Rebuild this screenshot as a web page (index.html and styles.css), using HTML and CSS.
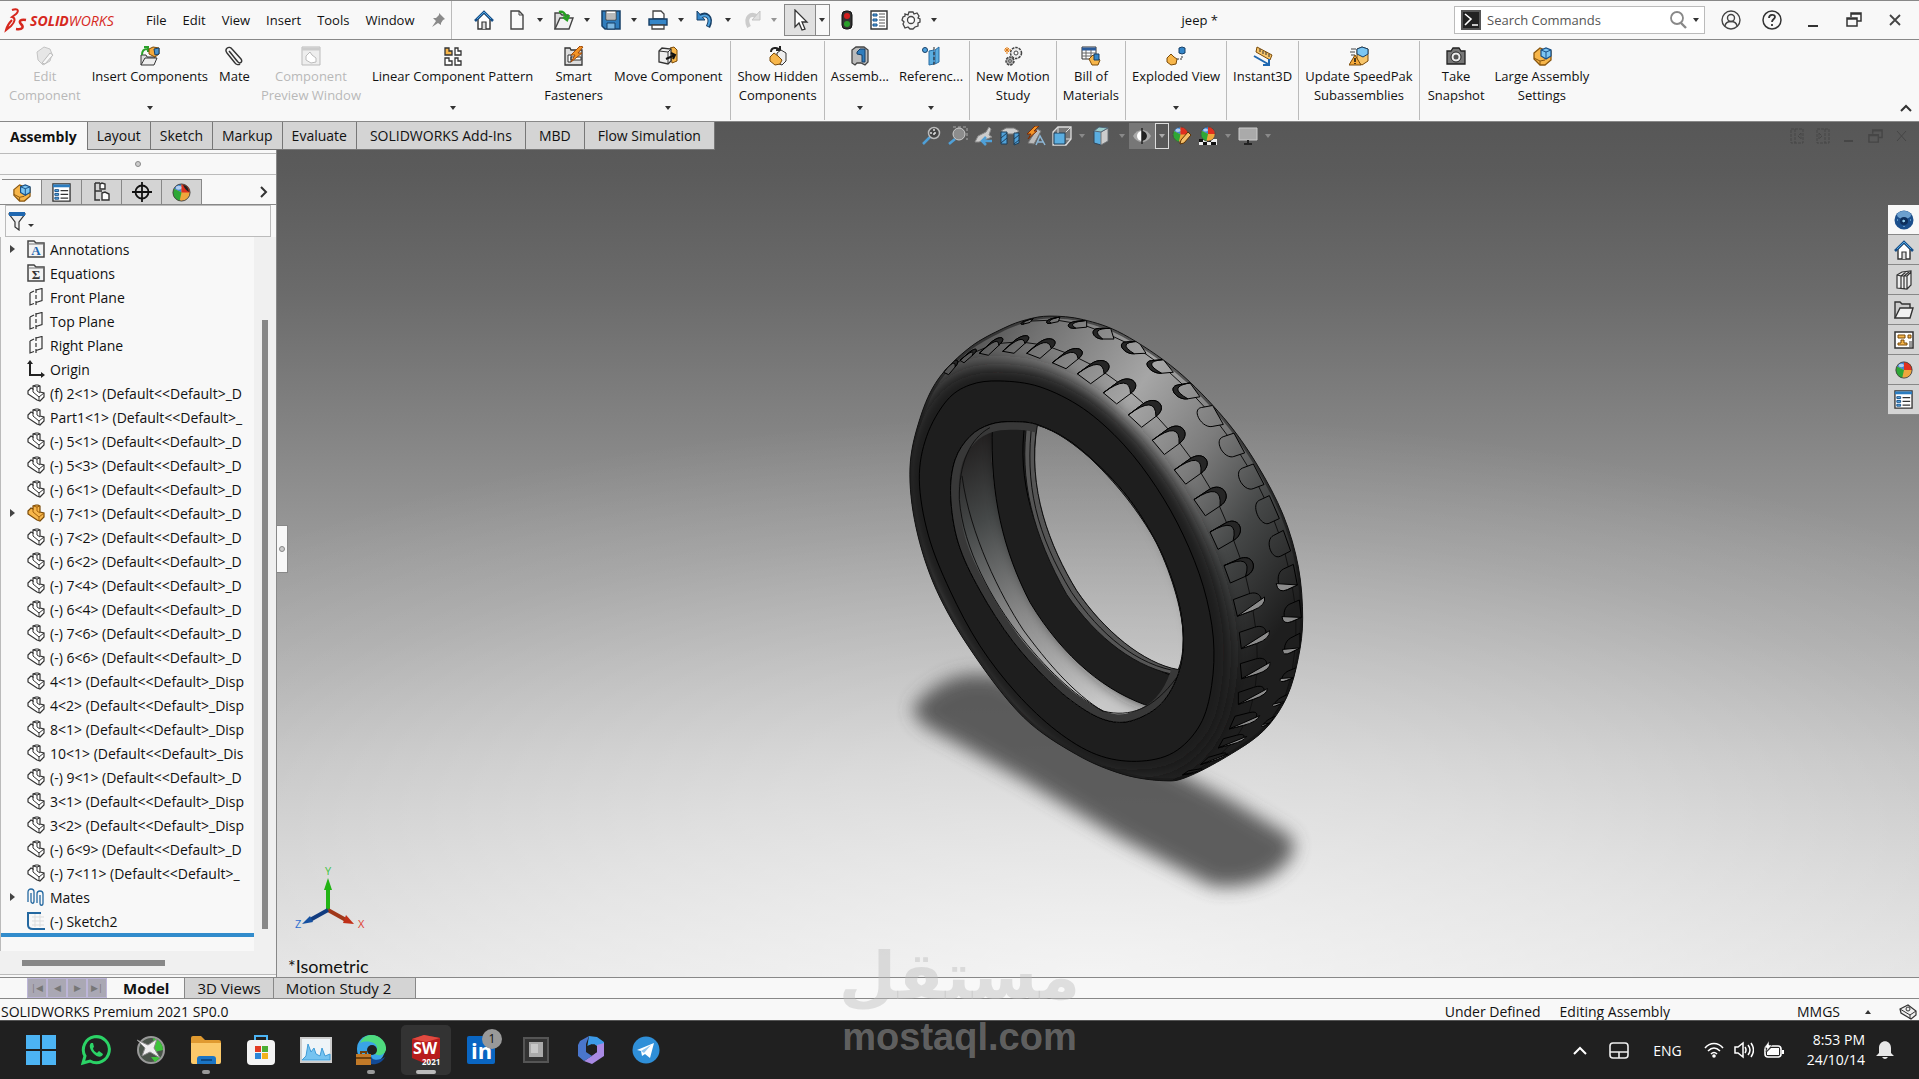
FILE: index.html
```html
<!DOCTYPE html>
<html lang="en">
<head>
    <meta charset="UTF-8">
    <title>jeep * - SOLIDWORKS Premium 2021</title>
    <link rel="stylesheet" href="styles.css">
</head>

<body>
<!-- shared icons -->
<svg class="defs" width="0" height="0" aria-hidden="true">
    <symbol id="i-part" viewBox="0 0 18 18">
        <path d="M1 7l3-3 2 1V2l3-1h2l2 1v6l4 1v4l-4 4-3-1-9-6z" fill="#fff" stroke="#333" stroke-width="1.200"/>
        <path d="M6 5v3l6 5v4M6 2l4 1 3-1M10 3v4l3 2M12 13l5-4" fill="none" stroke="#333"/>
    </symbol>
    <symbol id="i-asm" viewBox="0 0 18 18">
        <path d="M1 7l3-3 2 1V2l3-1h2l2 1v6l4 1v4l-4 4-3-1-9-6z" fill="#f7b64a" stroke="#7a4a08" stroke-width="1.200"/>
        <path d="M6 5v3l6 5v4M6 2l4 1 3-1M10 3v4l3 2M12 13l5-4" fill="none" stroke="#a4630c"/>
    </symbol>
    <symbol id="i-plane" viewBox="0 0 18 18">
        <path d="M3 5l4-2M9 2l6-1.500v12l-6 2M3 5v12l4-1.500" fill="none" stroke="#333" stroke-width="1.200"/>
        <path d="M9 1v17" stroke="#333" stroke-width="1.200" stroke-dasharray="4 2"/>
    </symbol>
    <symbol id="i-dir" viewBox="0 0 18 18">
        <path d="M1 1h6l2 2h8v14H1z" fill="#f3f3f3" stroke="#444" stroke-width="1.500"/>
        <path d="M1 4h16" stroke="#777"/>
    </symbol>
    <symbol id="i-home" viewBox="0 0 20 20">
        <path d="M4 9v10h12V9l-6-6z" fill="#fff" stroke="#333" stroke-width="1.400"/>
        <path d="M8 19v-7h4v7" fill="#ddd" stroke="#333" stroke-width="1.200"/>
        <path d="M1 11l9-9 9 9" fill="none" stroke="#174f87" stroke-width="2.600"/>
        <path d="M3 9l7-7 7 7" fill="none" stroke="#4fa3e0" stroke-width="1"/>
    </symbol>
    <symbol id="i-list" viewBox="0 0 20 20">
        <path d="M1 1h18v18H1z" fill="#fff" stroke="#333" stroke-width="1.400"/>
        <path d="M1 3h18" stroke="#2a7cc0" stroke-width="3"/>
        <path d="M9 8h8M9 12h8M9 16h8" stroke="#333" stroke-width="1.300"/>
        <path d="M3 7h4v2H3zM3 11h4v2H3zM3 15h4v2H3z" fill="#5db1ea" stroke="#174f87"/>
    </symbol>
    <symbol id="i-ball" viewBox="0 0 20 20">
        <circle cx="10" cy="10" r="9" fill="#f0a63c"/>
        <path d="M10 10L2 6a9 9 0 0 1 8-5z" fill="#3d86d6"/>
        <path d="M10 10V1a9 9 0 0 1 9 9z" fill="#e0301e"/>
        <path d="M10 10l-8-4a9 9 0 0 0 6 13z" fill="#2ea836"/>
        <circle cx="10" cy="10" r="9" fill="none" stroke="#444"/>
        <ellipse cx="7" cy="5" rx="3" ry="2" fill="#fff" opacity=".6"/>
    </symbol>
    <symbol id="i-cubes" viewBox="0 0 20 20">
        <path d="M2 7l6-5 5 2 6 1v9l-6 5H8l-6-6z" fill="#f7b64a" stroke="#8a560d" stroke-width="1.300"/>
        <path d="M2 12l6 3 5-1M8 15v4" fill="none" stroke="#8a560d"/>
        <path d="M9 4l5-2 5 2v6l-5 3-5-3z" fill="#7cc6f2" stroke="#174f87" stroke-width="1.200"/>
        <path d="M9 4l5 2 5-2M14 6v7" fill="none" stroke="#174f87"/>
    </symbol>
    <symbol id="i-restore" viewBox="0 0 16 16">
        <path d="M5 5V1h10v8h-4M1 6h10v8H1zM5 2h10M1 7h10" fill="none" stroke="currentColor" stroke-width="1.500"/>
    </symbol>
    <symbol id="i-gears" viewBox="0 0 20 20">
        <circle cx="13" cy="7" r="5.500" fill="#eee" stroke="#444" stroke-width="1.500" stroke-dasharray="2.500 1"/>
        <circle cx="13" cy="7" r="2" fill="#fff" stroke="#444"/>
        <circle cx="7" cy="15" r="4" fill="#aaa" stroke="#444" stroke-width="1.500" stroke-dasharray="2.500 1"/>
        <circle cx="7" cy="15" r="1.300" fill="#fff" stroke="#444"/>
        <path d="M4 1v7M1 4h7M2 2l4 4M6 2L2 6" stroke="#e07b12"/>
    </symbol>
</svg>

<header class="titlebar">
    <div class="logo">
        <svg width="24" height="26" viewBox="0 0 24 26">
            <path d="M8 3c5-2 8 0 4 4l-4 3c4 1 3 5-1 9l-5 4c1-4 3-7 6-10" fill="none" stroke="#d6281e" stroke-width="2"/>
            <path d="M22 13c-5-1-8 1-5 4s2 6-5 5" fill="none" stroke="#d6281e" stroke-width="2.500"/>
        </svg>
        <span class="logo-text"><b>SOLID</b>WORKS</span>
    </div>
    <nav class="menu">
        <button>File</button>
        <button>Edit</button>
        <button>View</button>
        <button>Insert</button>
        <button>Tools</button>
        <button>Window</button>
        <button aria-label="Pin menu"><svg width="14" height="14" viewBox="0 0 14 14"><path d="M8 0l6 6-2 1-2 3 0 2-3-2-6 4 4-6-3-3h3l3-3z" fill="#8a8a8a"/></svg></button>
    </nav>
    <div class="quick">
        <button class="q home" aria-label="Home"><svg width="20" height="20"><use href="#i-home"/></svg></button>
        <button class="q" aria-label="New"><svg width="20" height="20" viewBox="0 0 20 20"><path d="M4 1h8l4 4v14H4z" fill="#fafafa" stroke="#444" stroke-width="1.400"/><path d="M12 1v4h4" fill="none" stroke="#444"/></svg></button>
        <button class="drop" aria-label="New options"></button>
        <button class="q" aria-label="Open"><svg width="20" height="20" viewBox="0 0 20 20"><path d="M1 19V3h5l2 2h6v5" fill="#ddd" stroke="#444" stroke-width="1.400"/><path d="M1 19L6 8h13l-4 11z" fill="#f2f2f2" stroke="#444" stroke-width="1.400"/><path d="M5 2c4-1 6 1 7 5M9 7l4 3 2-5" fill="none" stroke="#25a021" stroke-width="2.500"/></svg></button>
        <button class="drop" aria-label="Open options"></button>
        <button class="q" aria-label="Save"><svg width="20" height="20" viewBox="0 0 20 20"><path d="M1 1h18v18H4l-3-3z" fill="#2f7dbd" stroke="#173f66" stroke-width="1.500"/><path d="M5 1h10v9H5z" fill="#fff" stroke="#444"/><path d="M6 4h8M6 6h8M6 8h8" stroke="#777"/><path d="M6 13h8v6H6z" fill="#7bb6e0" stroke="#173f66"/></svg></button>
        <button class="drop" aria-label="Save options"></button>
        <button class="q" aria-label="Print"><svg width="20" height="20" viewBox="0 0 20 20"><path d="M5 9V1h8l3 3v5z" fill="#fff" stroke="#444" stroke-width="1.300"/><path d="M1 9h18v6H1z" fill="#3586c8" stroke="#173f66" stroke-width="1.400"/><path d="M4 15h12v4H4z" fill="#fff" stroke="#444" stroke-width="1.300"/></svg></button>
        <button class="drop" aria-label="Print options"></button>
        <button class="q" aria-label="Undo"><svg width="20" height="20" viewBox="0 0 20 20"><path d="M4 7c7-5 14 0 9 10" fill="none" stroke="#173f66" stroke-width="4.500"/><path d="M2 1v9h8z" fill="#3586c8" stroke="#173f66"/><path d="M5 7c7-4 12 1 8 9" fill="none" stroke="#4fa3e0" stroke-width="2"/></svg></button>
        <button class="drop" aria-label="Undo options"></button>
        <button class="q" aria-label="Redo" disabled><svg width="20" height="20" viewBox="0 0 20 20"><path d="M16 7C9 2 2 7 7 17" fill="none" stroke="#ccc" stroke-width="4"/><path d="M18 1v9h-8z" fill="#e0e0e0" stroke="#c4c4c4"/></svg></button>
        <button class="drop faded" aria-label="Redo options"></button>
        <button class="q select" aria-label="Select"><svg width="20" height="22" viewBox="0 0 20 22"><path d="M5 1v17l4-4 3 7 3-1-3-7h5z" fill="#fff" stroke="#333" stroke-width="1.300"/></svg></button>
        <button class="drop select-drop" aria-label="Select options"></button>
        <button class="q light" aria-label="Rebuild"><svg width="12" height="20" viewBox="0 0 12 20"><rect x="1" y="1" width="10" height="18" rx="4" fill="#333" stroke="#111"/><circle cx="6" cy="6" r="3" fill="#d42020"/><circle cx="6" cy="14" r="3" fill="#2aa02a"/></svg></button>
        <button class="q light" aria-label="File properties"><svg width="18" height="20" viewBox="0 0 18 20"><path d="M1 1h16v18H1z" fill="#fff" stroke="#333" stroke-width="1.400"/><path d="M3 4h4v2H3zM3 9h4v2H3zM3 14h4v2H3z" fill="#5db1ea" stroke="#174f87"/><path d="M9 4h6M9 7h6M9 10h6M9 13h6M9 16h6" stroke="#555"/></svg></button>
        <button class="q" aria-label="Options"><svg width="20" height="20" viewBox="0 0 20 20"><path d="M8 2h4l1 2 3-1 2 3-1 2 2 1v3l-2 1v3l-3 1-2 2H9l-2-2-3 1-2-4 1-2-2-2 1-3 2-1V4l3 1z" fill="#f4f4f4" stroke="#444" stroke-width="1.300"/><circle cx="10" cy="10" r="3.500" fill="#fff" stroke="#444" stroke-width="1.300"/></svg></button>
        <button class="drop" aria-label="Options menu"></button>
    </div>
    <h1 class="doc-title">jeep *</h1>
    <div class="search">
        <svg width="20" height="20" viewBox="0 0 20 20"><path d="M1 1h18v18H1z" fill="#222" stroke="#555" stroke-width="2"/><path d="M4 4l6 5-6 6M11 15h6" fill="none" stroke="#fff" stroke-width="1.600"/></svg>
        <input id="search" type="text" aria-label="Search Commands" placeholder="Search Commands">
        <svg width="18" height="20" viewBox="0 0 18 20"><circle cx="7" cy="8" r="6" fill="none" stroke="#888" stroke-width="1.800"/><path d="M11 13l5 5" stroke="#888" stroke-width="2.400"/></svg>
        <button class="drop" aria-label="Search options"></button>
    </div>
    <div class="win">
        <button aria-label="Account"><svg width="20" height="20" viewBox="0 0 20 20"><g fill="none" stroke="#444" stroke-width="1.400"><circle cx="10" cy="10" r="9"/><circle cx="10" cy="8" r="3.500"/><path d="M4 16c1-6 11-6 12 0"/></g></svg></button>
        <button aria-label="Help"><svg width="20" height="20" viewBox="0 0 20 20"><circle cx="10" cy="10" r="9" fill="none" stroke="#333" stroke-width="1.500"/><path d="M7 8c0-4 6-4 6-1 0 2-3 2-3 5M10 14v2" fill="none" stroke="#333" stroke-width="1.800"/></svg></button>
        <button aria-label="Minimize"><svg width="16" height="16" viewBox="0 0 16 16"><path d="M3 14h10" stroke="#333" stroke-width="2"/></svg></button>
        <button aria-label="Restore"><svg width="16" height="16"><use href="#i-restore"/></svg></button>
        <button aria-label="Close"><svg width="16" height="16" viewBox="0 0 16 16"><path d="M3 3l10 10M13 3L3 13" stroke="#444" stroke-width="1.800"/></svg></button>
    </div>
</header>

<section class="ribbon">
    <div class="group first">
        <button class="cmd edit" disabled>
            <svg width="20" height="20" viewBox="0 0 20 20"><path d="M2 6l7-5 6 2 2 5-2 7-7 4-5-5z" fill="#e6e6e6" stroke="#c4c4c4"/><path d="M7 17l8-10 3 2-8 9z" fill="#f8f8f8" stroke="#bbb"/></svg>
            <span>Edit<br>Component</span></button>
        <button class="cmd more">
            <svg width="20" height="20" viewBox="0 0 20 20"><path d="M1 19V9h5l1 2h8v3" fill="#ddd" stroke="#333"/><path d="M1 19l4-7h12l-3 7z" fill="#eee" stroke="#333"/><path d="M2 9c0-5 2-6 5-6M4 1h4v5" fill="none" stroke="#2aa02a" stroke-width="2"/><path d="M9 3l4-2 6 1v6l-4 3-6-3z" fill="#f5a93a" stroke="#7a4a08"/><path d="M14 3l5-1v6l-4 1z" fill="#4b93cc" stroke="#173f66"/></svg>
            <span>Insert Components</span></button>
        <button class="cmd">
            <svg width="20" height="20" viewBox="0 0 20 20"><path d="M5 5l9 11c2 2 5 0 3-3L8 3C5-1 0 3 3 7l8 10c1 2 4 2 5 1M6 6l7 9" fill="none" stroke="#333" stroke-width="1.400"/></svg>
            <span>Mate</span></button>
        <button class="cmd" disabled>
            <svg width="20" height="20" viewBox="0 0 20 20"><path d="M1 1h18v18H1z" fill="#eee" stroke="#bbb"/><path d="M1 3h18" stroke="#ccc" stroke-width="3"/><path d="M5 10l4-4 2 3 4 3v4l-5 1-5-3z" fill="#fff" stroke="#bbb"/></svg>
            <span>Component<br>Preview Window</span></button>
        <button class="cmd more">
            <svg width="20" height="20" viewBox="0 0 20 20"><path d="M2 2h4v3h3v4H2z" fill="#f7b64a" stroke="#333" stroke-width="1.300"/><path d="M12 2h3v3h3v4h-6zM2 12h4v3h3v4H2zM12 12h3v3h3v4h-6z" fill="#fff" stroke="#333" stroke-width="1.300"/></svg>
            <span>Linear Component Pattern</span></button>
        <button class="cmd">
            <svg width="20" height="20" viewBox="0 0 20 20"><path d="M1 2h5l1 2h11v15H1z" fill="#ddd" stroke="#333" stroke-width="1.300"/><path d="M4 9h3v7H4zM7 11h10v3H7z" fill="#fff" stroke="#333"/><path d="M16 0L7 9h4l-4 7 11-9h-4l5-6z" fill="#f39325" stroke="#a14a08"/></svg>
            <span>Smart<br>Fasteners</span></button>
        <button class="cmd more">
            <svg width="20" height="20" viewBox="0 0 20 20"><path d="M12 2l4-1 3 3v11l-5 2z" fill="#f7b64a" stroke="#7a4a08"/><path d="M1 5l3-3 9 1v12l-3 3-9-2z" fill="#eee" stroke="#333" stroke-width="1.300"/><path d="M1 5l9 1 3-3M10 6v12" fill="none" stroke="#333"/><path d="M8 13l9-4M13 7l4 2-2 4" fill="none" stroke="#111" stroke-width="2"/></svg>
            <span>Move Component</span></button>
    </div>
    <div class="group">
        <button class="cmd">
            <svg width="20" height="20" viewBox="0 0 20 20"><path d="M3 6c0-5 7-5 8-2M8 4h4V0" fill="none" stroke="#222" stroke-width="2"/><path d="M9 7l4-3 5 3v8l-4 4-5-2z" fill="#eee" stroke="#333"/><path d="M2 11l4-4 4 3 4 4-2 4-5 1-5-4z" fill="#f7b64a" stroke="#7a4a08"/></svg>
            <span>Show Hidden<br>Components</span></button>
    </div>
    <div class="group">
        <button class="cmd more">
            <svg width="20" height="20" viewBox="0 0 20 20"><path d="M2 4l4-3h8l4 3v12l-3 3-4-2H7l-2 2-3-2z" fill="#bbb" stroke="#444" stroke-width="1.300"/><path d="M7 6l3-3h5v13h-3V9L7 8z" fill="#2f7dbd" stroke="#173f66"/></svg>
            <span>Assemb...</span></button>
        <button class="cmd more">
            <svg width="20" height="20" viewBox="0 0 20 20"><circle cx="4" cy="4" r="2.500" fill="#4fa3e0" stroke="#173f66"/><path d="M8 5l5-1v14l-5 1zM14 4l4-3v15l-4 2z" fill="#5baee0" stroke="#2a6da3"/><path d="M13 1v18" stroke="#222" stroke-dasharray="3 2"/></svg>
            <span>Referenc...</span></button>
    </div>
    <div class="group">
        <button class="cmd">
            <svg width="20" height="20"><use href="#i-gears"/></svg>
            <span>New Motion<br>Study</span></button>
    </div>
    <div class="group">
        <button class="cmd">
            <svg width="20" height="20" viewBox="0 0 20 20"><path d="M1 1h14v12H1z" fill="#fff" stroke="#333"/><path d="M1 3h14" stroke="#2b5b9a" stroke-width="3"/><path d="M1 7h14M1 10h14M5 4v9M10 4v9" stroke="#666"/><path d="M8 13l4-4 3 2 4 3-2 5h-6z" fill="#f7b64a" stroke="#7a4a08"/><path d="M13 8h5v6h-5z" fill="#3586c8" stroke="#173f66"/></svg>
            <span>Bill of<br>Materials</span></button>
    </div>
    <div class="group">
        <button class="cmd more">
            <svg width="20" height="20" viewBox="0 0 20 20"><path d="M1 12l4-4 3 3 3 2-1 5-5 1-4-3z" fill="#f7b64a" stroke="#7a4a08"/><path d="M13 2l3-1 3 1v5l-3 1-3-1z" fill="#3586c8" stroke="#173f66"/><path d="M11 13h5V9" fill="none" stroke="#333" stroke-dasharray="2 1"/></svg>
            <span>Exploded View</span></button>
    </div>
    <div class="group">
        <button class="cmd">
            <svg width="20" height="20" viewBox="0 0 20 20"><path d="M4 1l15 8-2 5L3 6z" fill="#f7c56a" stroke="#7a4a08"/><path d="M7 3v3M10 5v3M13 6v3M16 8v3" stroke="#333"/><path d="M1 10l14 8M16 13v6h-6" fill="none" stroke="#1f67b0" stroke-width="2"/></svg>
            <span>Instant3D</span></button>
    </div>
    <div class="group">
        <button class="cmd">
            <svg width="20" height="20" viewBox="0 0 20 20"><path d="M2 3h5M1 6h5M2 9h4" stroke="#444"/><path d="M8 3l5-2 6 2v12l-6 4-5-3z" fill="#f7c56a" stroke="#7a4a08"/><path d="M8 3l5-2 6 2v5l-5 3-6-3z" fill="#7cc6f2" stroke="#173f66"/><path d="M6 9l6 10H0z" fill="#f5a93a" stroke="#7a4a08"/><path d="M6 12v4M6 17v1" stroke="#111" stroke-width="1.500"/></svg>
            <span>Update SpeedPak<br>Subassemblies</span></button>
    </div>
    <div class="group last">
        <button class="cmd">
            <svg width="20" height="20" viewBox="0 0 20 20"><path d="M1 5h4l2-3h6l2 3h4v13H1z" fill="#777" stroke="#222" stroke-width="1.300"/><circle cx="10" cy="11" r="5" fill="#eee" stroke="#222"/><circle cx="10" cy="11" r="2.500" fill="#555"/></svg>
            <span>Take<br>Snapshot</span></button>
        <button class="cmd">
            <svg width="20" height="20"><use href="#i-cubes"/></svg>
            <span>Large Assembly<br>Settings</span></button>
    </div>
    <button class="collapse" aria-label="Collapse ribbon"><svg width="12" height="8" viewBox="0 0 12 8"><path d="M1 7l5-5 5 5" fill="none" stroke="#333" stroke-width="2"/></svg></button>
</section>

<main class="stage">
    <div class="tab-row">
        <nav class="tabs">
            <button class="active">Assembly</button>
            <button>Layout</button>
            <button>Sketch</button>
            <button>Markup</button>
            <button>Evaluate</button>
            <button class="roomy">SOLIDWORKS Add-Ins</button>
            <button class="roomy">MBD</button>
            <button class="roomy">Flow Simulation</button>
        </nav>
        <div class="view-tools">
            <button aria-label="Zoom to fit"><svg width="20" height="20" viewBox="0 0 20 20"><path d="M1 18l7-7" stroke="#4fa0d8" stroke-width="2.500"/><circle cx="12" cy="7" r="5.500" fill="#444" stroke="#bbb" stroke-width="1.500"/><path d="M12 3v8M8 7h8" stroke="#ddd" stroke-width="1.500" stroke-dasharray="2 2"/></svg></button>
            <button aria-label="Zoom to area"><svg width="20" height="20" viewBox="0 0 20 20"><path d="M5 1h14v13" fill="none" stroke="#aaa" stroke-dasharray="3 2"/><path d="M1 18l6-5" stroke="#4fa0d8" stroke-width="2.500"/><circle cx="11" cy="8" r="6" fill="#8d8d8d" stroke="#ccc"/></svg></button>
            <button aria-label="Previous view"><svg width="20" height="20" viewBox="0 0 20 20"><path d="M1 16l3-6 8-4 3-5 2 2-2 6 3 2-5 2-8 3z" fill="#ccc" stroke="#888"/><path d="M18 15H9M12 11l-4 4 4 4" fill="none" stroke="#4fa0d8" stroke-width="2.500"/></svg></button>
            <button aria-label="Section view"><svg width="20" height="20" viewBox="0 0 20 20"><path d="M1 5l5-3h8l5 3-4 3H5z" fill="#ccc" stroke="#777"/><path d="M1 6h6v12H1zM14 7h5v10l-5 2z" fill="#4fa0d8" stroke="#1e3e58"/><path d="M1 12l6-5M1 17l6-5M14 13l5-4M14 18l5-4" stroke="#1e3e58"/></svg></button>
            <button aria-label="Dynamic annotation"><svg width="20" height="20" viewBox="0 0 20 20"><path d="M2 17l9-14 4 2-7 13z" fill="#bbb" stroke="#777"/><path d="M9 0L1 8h4l-3 5 9-8H8l5-5z" fill="#f39325" stroke="#7a2d08"/><path d="M10 19l4-9 5 9M12 16h5" fill="none" stroke="#8db7d6" stroke-width="1.500"/></svg></button>
            <button aria-label="View orientation"><svg width="20" height="20" viewBox="0 0 20 20"><path d="M1 6l5-5h13v12l-5 6H1z" fill="#777" stroke="#ddd" stroke-width="1.300"/><path d="M2 7h11v11H2z" fill="#5baee0" stroke="#1e3e58"/><path d="M6 1v6M14 6l5-5M14 13h5" stroke="#ddd"/></svg></button>
            <button class="drop" aria-label="Orientation options"></button>
            <button aria-label="Display style"><svg width="20" height="20" viewBox="0 0 20 20"><path d="M2 5l5-4 9 1v13l-7 4-7-2z" fill="#5baee0" stroke="#345"/><path d="M9 6l7-4v13l-7 4z" fill="#ccc" stroke="#777"/><path d="M2 5l7 1 7-4-9-1z" fill="#9cc" stroke="#567"/></svg></button>
            <button class="drop" aria-label="Display options"></button>
            <button class="lit" aria-label="Hide or show items"><svg width="20" height="20" viewBox="0 0 20 20"><path d="M1 10c4-8 14-8 18 0-4 8-14 8-18 0z" fill="#aaa"/><circle cx="10" cy="10" r="5" fill="#fff"/><path d="M10 5a5 5 0 0 1 0 10z" fill="#222"/><path d="M10 2v16" stroke="#222" stroke-width="1.500"/></svg></button>
            <button class="drop boxed" aria-label="Hide options"></button>
            <button aria-label="Edit appearance"><svg width="20" height="20"><use href="#i-ball" width="17" height="17"/><path d="M8 18l1-4 7-8 3 3-7 8z" fill="#f5c069" stroke="#5d3305"/></svg></button>
            <button aria-label="Apply scene"><svg width="20" height="20" viewBox="0 0 20 20"><path d="M1 13h18v6H1z" fill="#eee"/><path d="M1 13h4v3H1zM9 13h4v3H9zM5 16h4v3H5zM13 16h5v3h-5z" fill="#111"/><use href="#i-ball" x="2" width="16" height="16"/></svg></button>
            <button class="drop" aria-label="Scene options"></button>
            <button aria-label="View settings"><svg width="20" height="20" viewBox="0 0 20 20"><path d="M1 2h18v12H1z" fill="#aaa" stroke="#ccc"/><path d="M10 14v4M6 18h8" stroke="#222" stroke-width="2"/></svg></button>
            <button class="drop" aria-label="View options"></button>
        </div>
        <div class="doc-win">
            <button aria-label="Previous pane"><svg width="14" height="16" viewBox="0 0 14 16"><path d="M1 1h12v14H1zM5 1v14M11 5L8 8l3 3z" fill="none" stroke="currentColor" stroke-dasharray="3 1"/></svg></button>
            <button aria-label="Next pane"><svg width="14" height="16" viewBox="0 0 14 16"><path d="M1 1h12v14H1zM9 1v14M3 5l3 3-3 3z" fill="none" stroke="currentColor" stroke-dasharray="3 1"/></svg></button>
            <button aria-label="Minimize document"><svg width="14" height="16" viewBox="0 0 14 16"><path d="M2 13h9" stroke="currentColor" stroke-width="2"/></svg></button>
            <button aria-label="Restore document"><svg width="15" height="15"><use href="#i-restore"/></svg></button>
            <button aria-label="Close document"><svg width="14" height="16" viewBox="0 0 14 16"><path d="M2 3l9 10M11 3L2 13" stroke="currentColor"/></svg></button>
        </div>
    </div>

    <div class="work">
        <aside class="panel">
            <div class="grip"><i class="dot"></i></div>
            <div class="panel-tabs">
                <button class="active" aria-label="Feature tree"><svg width="19" height="19"><use href="#i-cubes"/></svg></button>
                <button aria-label="Properties"><svg width="19" height="19"><use href="#i-list"/></svg></button>
                <button aria-label="Configurations"><svg width="18" height="20" viewBox="0 0 18 20"><path d="M2 1h5M2 1v17h5M2 9h7" fill="none" stroke="#333" stroke-width="1.500"/><path d="M7 2l2-1 3 1v5H7zM9 11l3-1 4 2v6H9z" fill="#fff" stroke="#333" stroke-width="1.400"/></svg></button>
                <button aria-label="Dimensions"><svg width="20" height="20" viewBox="0 0 20 20"><circle cx="10" cy="10" r="6.500" fill="none" stroke="#111" stroke-width="1.800"/><path d="M10 0v20M0 10h20" stroke="#111" stroke-width="1.800"/></svg></button>
                <button aria-label="Appearances"><svg width="19" height="19"><use href="#i-ball"/><path d="M11 2q5 0 6 7-4-2-6-7z" fill="#222"/></svg></button>
                <button class="next" aria-label="More tabs"><svg width="8" height="12" viewBox="0 0 8 12"><path d="M1 1l5 5-5 5" fill="none" stroke="#333" stroke-width="2"/></svg></button>
            </div>
            <div class="filter">
                <button class="filter-btn" aria-label="Filter">
                    <svg width="18" height="20" viewBox="0 0 18 20"><path d="M1 3h16l-6 8v8l-4-3v-5z" fill="#eee" stroke="#333" stroke-width="1.200"/><path d="M1 3h16" stroke="#1f67b0" stroke-width="4"/></svg>
                </button>
                <input type="text" aria-label="Filter tree">
            </div>
            <div class="tree-area">
                <ul class="tree">
                    <li class="open"><svg width="18" height="18"><use href="#i-dir"/><text x="9" y="15" class="dir-a">A</text></svg>Annotations</li>
                    <li><svg width="18" height="18"><use href="#i-dir"/><text x="9" y="15" class="dir-s">Σ</text></svg>Equations</li>
                    <li><svg width="18" height="18"><use href="#i-plane"/></svg>Front Plane</li>
                    <li><svg width="18" height="18"><use href="#i-plane"/></svg>Top Plane</li>
                    <li><svg width="18" height="18"><use href="#i-plane"/></svg>Right Plane</li>
                    <li><svg width="18" height="18" viewBox="0 0 18 18"><path d="M3 2v13h13" fill="none" stroke="#222" stroke-width="2"/><path d="M0 4l3-4 3 4zM14 12l4 3-4 3z" fill="#222"/></svg>Origin</li>
                    <li><svg width="18" height="18"><use href="#i-part"/></svg>(f) 2&lt;1&gt; (Default&lt;&lt;Default&gt;_D</li>
                    <li><svg width="18" height="18"><use href="#i-part"/></svg>Part1&lt;1&gt; (Default&lt;&lt;Default&gt;_</li>
                    <li><svg width="18" height="18"><use href="#i-part"/></svg>(-) 5&lt;1&gt; (Default&lt;&lt;Default&gt;_D</li>
                    <li><svg width="18" height="18"><use href="#i-part"/></svg>(-) 5&lt;3&gt; (Default&lt;&lt;Default&gt;_D</li>
                    <li><svg width="18" height="18"><use href="#i-part"/></svg>(-) 6&lt;1&gt; (Default&lt;&lt;Default&gt;_D</li>
                    <li class="open"><svg width="18" height="18"><use href="#i-asm"/></svg>(-) 7&lt;1&gt; (Default&lt;&lt;Default&gt;_D</li>
                    <li><svg width="18" height="18"><use href="#i-part"/></svg>(-) 7&lt;2&gt; (Default&lt;&lt;Default&gt;_D</li>
                    <li><svg width="18" height="18"><use href="#i-part"/></svg>(-) 6&lt;2&gt; (Default&lt;&lt;Default&gt;_D</li>
                    <li><svg width="18" height="18"><use href="#i-part"/></svg>(-) 7&lt;4&gt; (Default&lt;&lt;Default&gt;_D</li>
                    <li><svg width="18" height="18"><use href="#i-part"/></svg>(-) 6&lt;4&gt; (Default&lt;&lt;Default&gt;_D</li>
                    <li><svg width="18" height="18"><use href="#i-part"/></svg>(-) 7&lt;6&gt; (Default&lt;&lt;Default&gt;_D</li>
                    <li><svg width="18" height="18"><use href="#i-part"/></svg>(-) 6&lt;6&gt; (Default&lt;&lt;Default&gt;_D</li>
                    <li><svg width="18" height="18"><use href="#i-part"/></svg>4&lt;1&gt; (Default&lt;&lt;Default&gt;_Disp</li>
                    <li><svg width="18" height="18"><use href="#i-part"/></svg>4&lt;2&gt; (Default&lt;&lt;Default&gt;_Disp</li>
                    <li><svg width="18" height="18"><use href="#i-part"/></svg>8&lt;1&gt; (Default&lt;&lt;Default&gt;_Disp</li>
                    <li><svg width="18" height="18"><use href="#i-part"/></svg>10&lt;1&gt; (Default&lt;&lt;Default&gt;_Dis</li>
                    <li><svg width="18" height="18"><use href="#i-part"/></svg>(-) 9&lt;1&gt; (Default&lt;&lt;Default&gt;_D</li>
                    <li><svg width="18" height="18"><use href="#i-part"/></svg>3&lt;1&gt; (Default&lt;&lt;Default&gt;_Disp</li>
                    <li><svg width="18" height="18"><use href="#i-part"/></svg>3&lt;2&gt; (Default&lt;&lt;Default&gt;_Disp</li>
                    <li><svg width="18" height="18"><use href="#i-part"/></svg>(-) 6&lt;9&gt; (Default&lt;&lt;Default&gt;_D</li>
                    <li><svg width="18" height="18"><use href="#i-part"/></svg>(-) 7&lt;11&gt; (Default&lt;&lt;Default&gt;_</li>
                    <li class="open"><svg width="18" height="18" viewBox="0 0 18 18"><path d="M1 14V4c0-4 6-4 6 0v9c0 3-3 3-3 0V5M10 15V6c0-4 6-4 6 0v9c0 3-3 3-3 0V7" fill="none" stroke="#2468a0" stroke-width="1.300"/></svg>Mates</li>
                    <li><svg width="18" height="18" viewBox="0 0 18 18"><path d="M5 5h12M5 9h12M5 13h12M8 2v13M13 2v13" stroke="#ddd"/><path d="M14 1H1v12c0 3 2 4 5 4h12" fill="none" stroke="#2468a0" stroke-width="2"/></svg>(-) Sketch2</li>
                </ul>
                <div class="vscroll"><i></i></div>
            </div>
            <div class="hscroll"><i></i></div>
        </aside>

        <section class="canvas">
            <svg class="tyre" viewBox="0 0 440 620">
                <defs>
                    <linearGradient id="rubber" gradientUnits="userSpaceOnUse" x1="200" y1="100" x2="1150" y2="880">
                        <stop offset="0" stop-color="#4a4a4a"/>
                        <stop offset=".15" stop-color="#707070"/>
                        <stop offset=".42" stop-color="#a6a6a6"/>
                        <stop offset=".62" stop-color="#7c7c7c"/>
                        <stop offset=".8" stop-color="#454747"/>
                        <stop offset="1" stop-color="#1e1e1e"/>
                    </linearGradient>
                    <linearGradient id="wall" gradientUnits="userSpaceOnUse" x1="260" y1="380" x2="600" y2="1060">
                        <stop offset="0" stop-color="#242222"/>
                        <stop offset=".25" stop-color="#454848"/>
                        <stop offset=".6" stop-color="#8a8a8a"/>
                        <stop offset="1" stop-color="#c8c8c8"/>
                    </linearGradient>
                    <filter id="soft"><feGaussianBlur stdDeviation="9"/></filter>
                    <filter id="soft2" x="-20%" y="-20%" width="140%" height="140%"><feGaussianBlur stdDeviation="22"/></filter>
                    <clipPath id="body-clip"><path id="clip-body"/></clipPath>
                    <clipPath id="hole-clip"><path id="clip-hole"/></clipPath>
                </defs>
                <path d="M24 416Q50 386 84 384L110 386L268 472L340 510L400 546Q412 562 386 582Q360 600 322 596L230 548L130 488L54 446Q20 430 24 416Z" fill="#4c4c4c" opacity=".88" filter="url(#soft)"/>
                <!-- drawn by tyre.js -->
                <g id="tyre" transform="scale(.33333 .39541)"></g>
            </svg>
            <button class="side-handle" aria-label="Resize panel"><i class="dot"></i></button>
            <svg class="triad" width="80" height="76" viewBox="0 0 80 76">
                <path d="M39 52V28" stroke="#22b414" stroke-width="4"/><path d="M35 32l4-12 4 12z" fill="#22b414"/>
                <path d="M39 52L57 62" stroke="#a0381a" stroke-width="4"/><path d="M57 57l8 9-11-1z" fill="#c03018"/>
                <path d="M39 52L21 62" stroke="#123c80" stroke-width="4"/><path d="M21 58l-8 8 11-2z" fill="#1450a0"/>
                <text x="36" y="17" fill="#3fc43f">Y</text>
                <text x="69" y="70" fill="#e04030">X</text>
                <text x="6" y="70" fill="#3070d0">Z</text>
            </svg>
            <span class="view-name">*Isometric</span>
            <nav class="task-pane">
                <button class="active" aria-label="Resources"><svg width="20" height="20" viewBox="0 0 20 20"><circle cx="10" cy="10" r="9.500" fill="#1c4f8c"/><ellipse cx="10" cy="5" rx="7" ry="4" fill="#6c9fce"/><circle cx="10" cy="11" r="4" fill="#0e2f5c"/><path d="M9 10l2 1-2 1zM3 10h1M16 10h1M10 16v1" fill="#5ac8f0" stroke="#a0d8f4"/></svg></button>
                <button aria-label="Home"><svg width="20" height="20"><use href="#i-home"/></svg></button>
                <button aria-label="Design library"><svg width="18" height="20" viewBox="0 0 18 20"><path d="M2 5l5-3 9-1v14l-4 4-10-1zM2 5l4 1v13M6 6l5-4M6 6l3 0v13M9 6l5-4M9 6h3v13M12 6l4-4" fill="#eee" stroke="#333" stroke-width="1.200"/></svg></button>
                <button aria-label="File explorer"><svg width="20" height="18" viewBox="0 0 20 18"><path d="M1 17V1h5l2 2h8v4" fill="#ccc" stroke="#333" stroke-width="1.400"/><path d="M1 17L6 7h13l-3 10z" fill="#f2f2f2" stroke="#333" stroke-width="1.400"/></svg></button>
                <button aria-label="View palette"><svg width="20" height="18" viewBox="0 0 20 18"><path d="M1 1h18v16H1z" fill="#fff" stroke="#333" stroke-width="1.500"/><path d="M4 4h7v3H4zM14 4h3v3h-3zM4 14h9v-2h-3V9H7v3H4z" fill="#f7b64a" stroke="#7a4a08"/><path d="M15 10h3v6h-3z" fill="#999"/></svg></button>
                <button aria-label="Appearances"><svg width="18" height="18"><use href="#i-ball"/></svg></button>
                <button aria-label="Custom properties"><svg width="19" height="19"><use href="#i-list"/></svg></button>
            </nav>
        </section>
    </div>
</main>

<div class="bottom-tabs">
    <div class="steps">
        <button aria-label="First">|◀</button>
        <button aria-label="Previous">◀</button>
        <button aria-label="Next">▶</button>
        <button aria-label="Last">▶|</button>
    </div>
    <button class="tab active">Model</button>
    <button class="tab">3D Views</button>
    <button class="tab wide">Motion Study 2</button>
</div>

<div class="status">
    <span>SOLIDWORKS Premium 2021 SP0.0</span>
    <span class="state">Under Defined</span>
    <span class="mode">Editing Assembly</span>
    <button class="units">MMGS</button>
    <svg width="18" height="16" viewBox="0 0 18 16"><path d="M1 5l8-4 8 6v4l-5 4-10-6z" fill="#eee" stroke="#333" stroke-width="1.200"/><path d="M1 5l10 6 6-4M11 11v4" fill="none" stroke="#333"/><circle cx="9" cy="5" r="2" fill="none" stroke="#333"/></svg>
</div>

<footer class="taskbar">
    <div class="apps">
        <button aria-label="Start"><svg width="30" height="30" viewBox="0 0 30 30"><path d="M0 0h14v14H0zM16 0h14v14H16zM0 16h14v14H0zM16 16h14v14H16z" fill="#4cb4f4"/></svg></button>
        <button aria-label="WhatsApp"><svg width="32" height="32" viewBox="0 0 32 32"><path d="M3 29l2-7A13 13 0 1 1 10 27z" fill="none" stroke="#2bd366" stroke-width="3"/><path d="M11 9c-3 3 0 8 3 11s8 4 9 0l-4-3-2 2c-2-1-4-3-4-5l1-1-1-4z" fill="#2bd366"/></svg></button>
        <button aria-label="Downloads"><svg width="30" height="30" viewBox="0 0 30 30"><circle cx="15" cy="15" r="13" fill="#4a544a" stroke="#999" stroke-width="2"/><path d="M17 3a12 12 0 0 1 10 12l-8 2zM15 22l10 0-6 5z" fill="#3ec43a"/><path d="M1 5l11 5 9-6-3 9 6 10-10-6-8 4 3-8z" fill="#eee" stroke="#888"/></svg></button>
        <button class="running" aria-label="File Explorer"><svg width="30" height="28" viewBox="0 0 30 28"><path d="M0 2q0-2 2-2h8l4 4h14q2 0 2 2v6H0z" fill="#e09a30"/><path d="M0 7h30v19q0 2-2 2H2q-2 0-2-2z" fill="#fbc96a"/><path d="M6 28v-5q0-3 3-3h13q3 0 3 3v5z" fill="#1b75c4"/><path d="M10 24h11" stroke="#0d4b86" stroke-width="2"/></svg></button>
        <button aria-label="Store"><svg width="30" height="32" viewBox="0 0 30 32"><path d="M9 8V2h12v6" fill="none" stroke="#4cb4f4" stroke-width="2"/><rect x="1" y="6" width="28" height="25" rx="4" fill="#f4f4f4"/><path d="M9 12h6v6H9z" fill="#e23c24"/><path d="M16 12h6v6h-6z" fill="#4cae34"/><path d="M9 19h6v6H9z" fill="#2a86d8"/><path d="M16 19h6v6h-6z" fill="#f2b21c"/></svg></button>
        <button aria-label="Performance"><svg width="32" height="26" viewBox="0 0 32 26"><path d="M1 1h30v24H1z" fill="#eef4f8" stroke="#ccc" stroke-width="2"/><path d="M2 23l4-4 2-12 3 8 3-4 2 6 4 2 2-8 3 8 5-2v6z" fill="#76c3f0" stroke="#3f9cd8"/></svg></button>
        <button class="running" aria-label="Edge"><svg width="32" height="32" viewBox="0 0 32 32"><circle cx="16" cy="15" r="14" fill="#3aa4e8"/><path d="M16 1c10 0 16 8 15 15-2 6-8 6-11 4l2-6C22 8 12 6 5 9 8 3 12 1 16 1z" fill="#4edb7e"/><path d="M16 21c0 6 8 6 14 2-3 6-9 8-14 7z" fill="#124a96"/><circle cx="17" cy="16" r="5" fill="#202020"/><path d="M1 20h15v11H1z" fill="#c27a28"/><path d="M1 24h15M6 20v-2h5v2" fill="none" stroke="#6f410c" stroke-width="2"/></svg></button>
        <button class="running current" aria-label="SOLIDWORKS 2021"><svg width="32" height="32" viewBox="0 0 32 32"><path d="M2 5l12-4 16 3v20l-16 5-12-5z" fill="#b81c1c"/><path d="M2 5l12-4 16 3-14 4z" fill="#e04a40"/><text x="3" y="20" class="sw">SW</text><text x="12" y="31" class="sw-year">2021</text></svg></button>
        <button class="linkedin" aria-label="LinkedIn"><svg width="28" height="28" viewBox="0 0 28 28"><rect width="28" height="28" rx="2" fill="#0a66c2"/><text x="4" y="23" class="in">in</text></svg><span class="badge">1</span></button>
        <button aria-label="Processor"><svg width="26" height="26" viewBox="0 0 26 26"><path d="M1 1h24v24H1z" fill="#333" stroke="#555" stroke-width="2"/><path d="M6 5h14v15H6z" fill="#aaa"/><path d="M8 7h7v9H8z" fill="#c8c8c8"/></svg></button>
        <button aria-label="Copilot"><svg width="28" height="30" viewBox="0 0 28 30"><path d="M12 1l8 1 7 5v9l-7-5-3-2-7 4z" fill="#3c9ae8"/><path d="M27 8v13l-12 8-8-3 9-6 4-3v-7z" fill="#a98ae4"/><path d="M12 1L3 6 1 10v11l6 5 8-5-6-4V9z" fill="#4a76cc"/><path d="M10 11l5-2 5 3v5l-5 3-5-3z" fill="#202020"/></svg></button>
        <button aria-label="Telegram"><svg width="28" height="28" viewBox="0 0 28 28"><circle cx="14" cy="14" r="13.500" fill="#2f8fd8"/><path d="M5 14l17-7-4 15-5-4-3 2-1-5z" fill="#fff"/><path d="M9 15l10-6-7 8z" fill="#8fc4ee"/></svg></button>
    </div>
    <div class="tray">
        <button class="t-up" aria-label="Hidden icons"><svg width="14" height="9" viewBox="0 0 14 9"><path d="M1 8l6-6 6 6" fill="none" stroke="#fff" stroke-width="2"/></svg></button>
        <button class="t-pad" aria-label="Touchpad"><svg width="20" height="17" viewBox="0 0 20 17"><rect x="1" y="1" width="18" height="15" rx="3" fill="none" stroke="#eee" stroke-width="1.600"/><path d="M1 10h18M10 10v6" stroke="#eee" stroke-width="1.600"/></svg></button>
        <button class="t-lang">ENG</button>
        <button class="t-net" aria-label="Network, sound and battery">
            <svg width="20" height="16" viewBox="0 0 20 16"><path d="M1 6c5-6 13-6 18 0M4 9c4-4 8-4 12 0M7 12c2-2 4-2 6 0" fill="none" stroke="#fff" stroke-width="1.600"/><circle cx="10" cy="14" r="1.800" fill="#fff"/></svg>
            <svg width="20" height="18" viewBox="0 0 20 18"><path d="M1 6h3l5-4v14l-5-4H1z" fill="none" stroke="#fff" stroke-width="1.500"/><path d="M11 6q2 3 0 6M14 4q4 5 0 10M17 2q5 7 0 14" fill="none" stroke="#fff" stroke-width="1.500"/></svg>
            <svg width="20" height="18" viewBox="0 0 20 18"><rect x="1" y="5" width="16" height="11" rx="3" fill="none" stroke="#fff" stroke-width="1.600"/><path d="M7 7h8v7H3v-3zM18 9h2v4h-2z" fill="#fff"/><path d="M5 0L0 7h3l-1 4 6-7H5z" fill="#fff" stroke="#202020" stroke-width=".5"/></svg>
        </button>
        <button class="t-clock">8:53 PM<br>24/10/14</button>
        <button aria-label="Notifications"><svg width="18" height="20" viewBox="0 0 18 20"><path d="M3 8c0-9 12-9 12 0v5l3 3H0l3-3zM6 17h6q-3 4-6 0z" fill="#e8e8e8"/></svg></button>
    </div>
</footer>

<div class="watermark">
    <span class="wm-ar" lang="ar" dir="rtl">مستقل</span>
    <span class="wm-en">mostaql.com</span>
</div>

<script src="tyre.js"></script>
</body>
</html>
```
FILE: styles.css
```css
* {
    box-sizing: border-box;
}

body {
    display: flex;
    flex-direction: column;
    height: 100vh;
    margin: 0;
    overflow: hidden;
    background: #f8f8f8;
    color: #111;
    font-family: "Open Sans", "Noto Sans", sans-serif;
    font-size: 14px;
}

button {
    align-items: center;
    background: none;
    border: 0;
    color: inherit;
    display: flex;
    flex: none;
    font: inherit;
    justify-content: center;
    padding: 0;
}

svg {
    display: block;
    flex: none;
}

.defs {
    position: absolute;
}

.dot {
    background: #ccc;
    border: 1px solid #888;
    border-radius: 50%;
    height: 6px;
    width: 6px;
}

.drop {
    width: 23px;
}

.drop::after {
    border: 3px solid transparent;
    border-bottom: 0;
    border-top: 4px solid #333;
    content: "";
}

.faded {
    opacity: .5;
    width: 20px;
}

/* title bar */
.titlebar {
    align-items: center;
    border-bottom: 1px solid #888;
    border-top: 1px solid #888;
    display: flex;
    flex: none;
    font-size: 13px;
    height: 40px;
}

.logo {
    align-items: center;
    color: #d6281e;
    display: flex;
    gap: 2px;
    padding-left: 4px;
    width: 146px;
}

.logo-text {
    font-size: 14px;
    font-style: italic;
}

.menu {
    border-right: 1px solid #bbb;
    display: flex;
    gap: 16px;
    height: 38px;
    padding-right: 6px;
}

.quick {
    align-items: center;
    display: flex;
    height: 38px;
    padding-left: 20px;
}

.q {
    height: 32px;
    width: 24px;
}

.home {
    margin-right: 9px;
}

.light {
    margin-right: 8px;
}

.select {
    background: #e0e0e0;
    border: 1px solid #888;
    width: 32px;
}

.select-drop {
    border: 1px solid #888;
    border-left: 0;
    height: 32px;
    margin-right: 5px;
    width: 14px;
}

.doc-title {
    flex: 1;
    font-size: 13px;
    font-weight: 400;
    margin: 0;
    text-align: center;
}

.search {
    align-items: center;
    background: #fff;
    border: 1px solid #bbb;
    display: flex;
    height: 28px;
    padding-left: 6px;
    width: 251px;
}

.search input {
    border: 0;
    flex: 1;
    font: inherit;
    height: 24px;
    min-width: 0;
    padding: 0 6px;
}

.search input::placeholder {
    color: #555;
}

.search .drop {
    width: 16px;
}

.win {
    display: flex;
    padding: 0 4px 0 5px;
}

.win button {
    color: #333;
    height: 32px;
    width: 41px;
}

/* ribbon */
.ribbon {
    border-bottom: 1px solid #888;
    display: flex;
    flex: none;
    font-size: 13px;
    height: 82px;
    line-height: 19px;
    padding: 1px 0 1px 3px;
}

.group {
    border-right: 1px solid #bbb;
    display: flex;
    padding: 0 1px 2px;
}

.first {
    gap: 1px;
    padding-right: 3px;
}

.last {
    border-right: 0;
    padding-left: 3px;
}

.cmd {
    flex-direction: column;
    gap: 1px;
    justify-content: flex-start;
    padding: 5px 5px 0;
}

.cmd:disabled {
    color: #b8b8b8;
}

.more::after {
    border: 3px solid transparent;
    border-bottom: 0;
    border-top: 4px solid #333;
    content: "";
    margin-bottom: 8px;
    margin-top: auto;
}

.collapse {
    align-self: flex-end;
    margin-left: auto;
    padding: 8px 7px;
}

/* main stage with the scene backdrop */
.stage {
    background:
        radial-gradient(ellipse 68% 66% at 57% 100%, rgb(255 255 255 / 65%), rgb(255 255 255 / 42%) 40%, rgb(255 255 255 / 10%) 80%, transparent),
        linear-gradient(#575757, #5b5b5b 6%, #6b6b6b 20%, #828282 35%, #9a9a9a 50%, #a8a8a8 60%, #bfbfbf 75%, #dedede);
    display: flex;
    flex: 1;
    flex-direction: column;
    min-height: 0;
}

.tab-row {
    display: flex;
    flex: none;
    height: 28px;
}

.tabs {
    display: flex;
}

.tabs button {
    background: #d4d4d4;
    border-bottom: 1px solid #777;
    border-right: 1px solid #777;
    padding: 0 9px;
}

.tabs .roomy {
    padding: 0 13px;
}

.tabs .active {
    background: #f8f8f8;
    border-bottom: 0;
    font-weight: 700;
    padding: 0 10px;
}

.view-tools {
    align-items: center;
    display: flex;
    margin-left: auto;
}

.view-tools button {
    height: 26px;
    width: 26px;
}

.view-tools .drop {
    opacity: .6;
    width: 14px;
}

.view-tools .drop::after {
    border-top-color: #aaa;
}

.view-tools .lit {
    background: #777;
}

.view-tools .boxed {
    border: 1px solid #ddd;
    opacity: 1;
}

.doc-win {
    align-items: center;
    color: #464646;
    display: flex;
    gap: 12px;
    padding-right: 10px;
    padding-left: 515px;
}

.work {
    display: flex;
    flex: 1;
    min-height: 0;
}

/* feature tree panel */
.panel {
    background: #f8f8f8;
    border-right: 1px solid #888;
    display: flex;
    flex: none;
    flex-direction: column;
    width: 277px;
}

.grip {
    align-items: center;
    border-bottom: 1px solid #bbb;
    border-top: 1px solid #bbb;
    display: flex;
    flex: none;
    height: 22px;
    justify-content: center;
    margin-top: 3px;
}

.panel-tabs {
    border-bottom: 1px solid #888;
    display: flex;
    flex: none;
    height: 26px;
    margin-top: 4px;
    padding-left: 2px;
}

.panel-tabs button {
    background: #d4d4d4;
    border-right: 1px solid #888;
    border-top: 1px solid #888;
    width: 40px;
}

.panel-tabs .active {
    background: #f8f8f8;
}

.panel-tabs .next {
    background: none;
    border: 0;
    margin-left: auto;
    width: 24px;
}

.filter {
    border: 1px solid #bbb;
    display: flex;
    flex: none;
    height: 32px;
    margin: 0 5px;
}

.filter-btn {
    gap: 2px;
    padding-left: 2px;
}

.filter-btn::after {
    border: 3px solid transparent;
    border-bottom: 0;
    border-top: 3px solid #333;
    content: "";
    margin-top: 8px;
}

.filter input {
    background: none;
    border: 0;
    flex: 1;
    min-width: 0;
}

.tree-area {
    display: flex;
    flex: 1;
    min-height: 0;
}

.tree {
    border-left: 1px solid #bbb;
    flex: 1;
    list-style: none;
    margin: 0;
    overflow: hidden;
    padding: 0;
}

.tree li {
    align-items: center;
    display: flex;
    gap: 5px;
    height: 24px;
    padding-left: 26px;
    white-space: nowrap;
}

.tree .open::before {
    border: 4px solid transparent;
    border-left: 5px solid #444;
    border-right: 0;
    content: "";
    margin-left: -17px;
    margin-right: 7px;
}

.tree li:last-child {
    border-bottom: 4px solid #328ccc;
    height: 28px;
}

.dir-a,
.dir-s {
    fill: #1f67b0;
    font-family: "Liberation Serif", serif;
    font-size: 13px;
    font-weight: 700;
    text-anchor: middle;
}

.dir-s {
    fill: #333;
}

.vscroll {
    background: #f0f0f0;
    flex: none;
    padding: 83px 8px 22px;
    width: 22px;
}

.vscroll i {
    background: #888;
    display: block;
    height: 100%;
    width: 6px;
}

.hscroll {
    background: #f0f0f0;
    border-bottom: 1px solid #bbb;
    flex: none;
    height: 24px;
    margin-bottom: 2px;
    padding: 9px 22px;
}

.hscroll i {
    background: #888;
    display: block;
    height: 6px;
    width: 143px;
}

/* 3D view */
.canvas {
    flex: 1;
    min-width: 0;
    overflow: hidden;
    position: relative;
}

.tyre {
    height: 620px;
    left: calc(50% - 208px);
    overflow: visible;
    position: absolute;
    top: 140px;
    width: 440px;
}

.side-handle {
    background: #f8f8f8;
    border: 1px solid #888;
    border-left: 0;
    height: 48px;
    left: 0;
    position: absolute;
    top: 375px;
    width: 11px;
}

.triad {
    bottom: 43px;
    font-size: 11px;
    left: 12px;
    position: absolute;
}

.view-name {
    bottom: 1px;
    font-family: Lato, sans-serif;
    font-size: 18px;
    left: 11px;
    line-height: 20px;
    position: absolute;
}

.task-pane {
    display: flex;
    flex-direction: column;
    position: absolute;
    right: 0;
    top: 55px;
}

.task-pane button {
    background: #d4d4d4;
    border-bottom: 1px solid #888;
    height: 30px;
    width: 31px;
}

.task-pane .active {
    background: #f8f8f8;
}

/* model tabs */
.bottom-tabs {
    border-bottom: 1px solid #888;
    border-top: 1px solid #888;
    display: flex;
    flex: none;
    font-size: 15px;
    height: 22px;
    line-height: 20px;
    padding-left: 27px;
}

.steps {
    display: flex;
}

.steps button {
    background: #aaa8b4;
    border: 1px solid #bdb6d8;
    color: #777;
    font-size: 9px;
    width: 20px;
}

.tab {
    background: #d4d4d4;
    border-right: 1px solid #888;
    padding: 0 12px;
}

.tab.active {
    background: #f8f8f8;
    font-weight: 700;
    padding: 0 15px 0 16px;
}

.tab.wide {
    padding-right: 24px;
}

/* status bar */
.status {
    align-items: center;
    display: flex;
    flex: none;
    height: 21px;
    padding: 4px 2px 0 1px;
}

.state {
    margin-left: auto;
}

.mode {
    margin-left: 19px;
}

.units {
    margin: 0 28px 0 127px;
}

.units::after {
    border: 3px solid transparent;
    border-bottom: 4px solid #333;
    border-top: 0;
    content: "";
    margin-left: 25px;
}

/* Windows taskbar */
.taskbar {
    background: #202020;
    border-top: 1px solid #555;
    color: #fff;
    display: flex;
    flex: none;
    height: 59px;
    justify-content: space-between;
    padding: 4px 25px 4px 16px;
}

.apps {
    display: flex;
    gap: 5px;
}

.apps button {
    border-radius: 5px;
    height: 50px;
    position: relative;
    width: 50px;
}

.apps .current {
    background: #333;
}

.running::after {
    background: #999;
    border-radius: 2px;
    bottom: 1px;
    content: "";
    height: 4px;
    position: absolute;
    width: 8px;
}

.current::after {
    background: #bbb;
    width: 20px;
}

.badge {
    background: #999;
    border-radius: 50%;
    color: #111;
    font-size: 12px;
    height: 20px;
    line-height: 20px;
    position: absolute;
    right: 4px;
    top: 4px;
    width: 20px;
}

.sw {
    fill: #fff;
    font-size: 16px;
    font-weight: 700;
}

.sw-year {
    fill: #fff;
    font-size: 8px;
    font-weight: 700;
}

.in {
    fill: #fff;
    font-size: 22px;
    font-weight: 700;
}

.tray {
    align-items: center;
    display: flex;
}

.t-pad {
    margin: 0 24px 0 22px;
}

.t-net {
    gap: 10px;
    margin: 0 23px 0 22px;
}

.t-clock {
    line-height: 20px;
    margin-right: 11px;
    text-align: right;
}

/* watermark over everything */
.watermark {
    align-items: center;
    bottom: 23px;
    color: rgb(188 188 188 / 43%);
    display: flex;
    flex-direction: column;
    left: 50%;
    pointer-events: none;
    position: absolute;
    transform: translateX(-50%);
}

.wm-ar {
    font-family: "DejaVu Sans", sans-serif;
    font-size: 66px;
    font-weight: 700;
    line-height: 82px;
}

.wm-en {
    font-family: "Liberation Sans", sans-serif;
    font-size: 38px;
    font-weight: 700;
    line-height: 38px;
}
```
FILE: tyre.js
```js
const NS = "http://www.w3.org/2000/svg";
const tyre = document.getElementById("tyre");

// closed smooth curve through the points
function loop(p) {
    const n = p.length;
    let d = `M${p[0]}`;
    for (let i = 0; i < n; i++) {
        const a = p[(i + n - 1) % n], b = p[i], c = p[(i + 1) % n], e = p[(i + 2) % n];
        d += `C${b[0] + (c[0] - a[0]) / 6},${b[1] + (c[1] - a[1]) / 6} ${c[0] - (e[0] - b[0]) / 6},${c[1] - (e[1] - b[1]) / 6} ${c}`;
    }
    return d + "Z";
}

function add(d, attrs) {
    const el = document.createElementNS(NS, "path");
    el.setAttribute("d", d);
    el.setAttribute("fill", "none");
    el.setAttribute("vector-effect", "non-scaling-stroke");
    for (const k in attrs) el.setAttribute(k, attrs[k]);
    tyre.appendChild(el);
}

const body = loop([[480, 66], [580, 75], [700, 112], [860, 203], [1000, 322], [1100, 440], [1180, 570], [1225, 700], [1238, 830], [1225, 930], [1190, 1030], [1120, 1115], [1010, 1180], [890, 1232], [820, 1241], [700, 1225], [560, 1175], [400, 1080], [250, 920], [140, 760], [78, 600], [60, 450], [90, 325], [145, 225], [240, 145], [340, 97], [410, 75]]);
const face = loop([[330, 230], [450, 245], [580, 300], [700, 390], [800, 500], [880, 620], [940, 750], [970, 880], [965, 1000], [930, 1100], [850, 1170], [740, 1192], [620, 1175], [500, 1115], [380, 1020], [270, 900], [180, 760], [115, 620], [88, 480], [110, 370], [170, 280], [240, 240]]);
const hole = loop([[370, 333], [450, 343], [560, 395], [700, 510], [800, 640], [860, 770], [880, 880], [865, 970], [815, 1045], [740, 1085], [670, 1092], [590, 1065], [490, 1000], [370, 890], [270, 760], [205, 640], [182, 520], [195, 430], [240, 370], [300, 340]]);
// background seen through the tyre
const sight = "M442 342C500 355 560 395 600 425C700 505 760 580 800 640C850 730 880 820 880 885C879 915 875 940 865 960C760 945 640 860 560 760C480 650 410 500 442 342Z";

document.getElementById("clip-body").setAttribute("d", body);
document.getElementById("clip-hole").setAttribute("d", hole + sight);
document.getElementById("clip-hole").setAttribute("clip-rule", "evenodd");

add(body + hole, {fill: "url(#rubber)", "fill-rule": "evenodd"});
add(body, {stroke: "#111", "stroke-width": 5, "clip-path": "url(#body-clip)", opacity: .5});
add(face, {stroke: "#1e1c1c", "stroke-width": 34, filter: "url(#soft2)", "clip-path": "url(#body-clip)"});

// tread blocks: two corners of the flat end, then the vector to the round end
const inner = [
    [[160, 208], [176, 214], [30, -30]], [[210, 178], [222, 184], [38, -28]],
    [[268, 160], [295, 165], [48, -38]], [[338, 155], [372, 160], [50, -38]],
    [[410, 160], [450, 173], [52, -38]], [[487, 184], [528, 199], [56, -38]],
    [[562, 212], [602, 237], [62, -38]], [[640, 260], [680, 288], [64, -40]],
    [[715, 316], [755, 347], [66, -42]], [[787, 380], [823, 416], [68, -42]],
    [[853, 455], [887, 491], [70, -42]], [[912, 530], [946, 571], [68, -38]],
    [[960, 612], [984, 656], [70, -34]], [[1002, 697], [1021, 741], [70, -26]],
    [[1030, 783], [1042, 825], [70, -22]], [[1048, 866], [1054, 907], [70, -20]],
    [[1051, 945], [1055, 983], [70, -18]], [[1045, 1018], [1045, 1048], [70, -20]],
    [[1035, 1078], [1018, 1110], [66, -14]], [[1000, 1135], [985, 1158], [62, -14]],
    [[955, 1182], [932, 1200], [56, -14]], [[895, 1216], [878, 1226], [44, -6]]
];
const outer = [
    [[430, 72], [420, 82], [-28, 6]], [[510, 68], [505, 80], [-34, 6]],
    [[590, 77], [590, 94], [-50, 4]], [[662, 97], [672, 124], [-52, 0]],
    [[745, 130], [768, 160], [-54, 2]], [[820, 176], [850, 208], [-54, 4]],
    [[900, 235], [930, 270], [-56, 8]], [[968, 292], [1000, 340], [-52, 8]],
    [[1032, 362], [1064, 412], [-50, 14]], [[1090, 440], [1122, 492], [-50, 16]],
    [[1138, 520], [1168, 578], [-46, 18]], [[1180, 608], [1202, 660], [-46, 20]],
    [[1210, 694], [1222, 746], [-46, 18]], [[1228, 784], [1234, 828], [-44, 16]],
    [[1230, 868], [1230, 905], [-42, 18]], [[1220, 955], [1212, 980], [-36, 12]],
    [[1200, 1020], [1188, 1040], [-36, 14]], [[1155, 1078], [1140, 1095], [-24, 10]]
];

function seam(list, t) {
    return "M" + list.map(([p, q, v]) => [(p[0] + q[0]) / 2 + v[0] * t, (p[1] + q[1]) / 2 + v[1] * t]).join("L");
}

function block([p, q, v], look) {
    const a = [p[0] + v[0] * .65, p[1] + v[1] * .65];
    const b = [q[0] + v[0] * .65, q[1] + v[1] * .65];
    const c = [p[0] + v[0] * 1.25, p[1] + v[1] * 1.25];
    const e = [q[0] + v[0] * 1.25, q[1] + v[1] * 1.25];
    const edge = {stroke: "#000", "stroke-width": 1, "clip-path": "url(#body-clip)"};
    add(`M${p}L${a}C${c} ${e} ${b}L${q}Z`, {...edge, fill: "url(#rubber)"});
    if (look === "low") {
        // lit lower side of the groove
        add(`M${q}L${b}Q${e} ${(c[0] + e[0]) / 2},${(c[1] + e[1]) / 2}Z`, {...edge, fill: "#8c8c8c"});
    } else if (look === "high") {
        add(`M${p}L${a}C${c} ${e} ${b}Q${c} ${p}Z`, {...edge, fill: "#262626"});
    }
}

add(seam(inner, .7), {stroke: "#111", "stroke-width": 1});
add(seam(outer, .3), {stroke: "#111", "stroke-width": 1});
inner.forEach(b => block(b, b[0][1] > 750 ? "low" : "high"));
outer.forEach(b => block(b, b[0][1] > 690 ? "low" : b[0][1] < 250 ? "high" : ""));
add(body, {stroke: "#111", "stroke-width": 1});

// flat side
add(face + hole, {fill: "#1e1e1e", "fill-rule": "evenodd", stroke: "#000", "stroke-width": 1});

// inside of the rim
const clip = {"clip-path": "url(#hole-clip)"};
add(hole + sight, {fill: "url(#wall)", "fill-rule": "evenodd"});
add("M325 300C310 520 370 700 480 840C580 950 700 1040 800 1050L900 960L640 860L420 600L440 300Z", {...clip, fill: "#1e1c1c", filter: "url(#soft2)"});
add("M307 340C300 520 340 660 420 790C520 930 650 1020 790 1056L865 980C740 950 620 860 540 760C430 620 380 480 405 335Z", {...clip, fill: "#1e1e1e", stroke: "#000", "stroke-width": 1});
add("M412 330C385 480 430 620 530 770C620 880 740 960 870 975L865 955C760 945 640 860 560 760C480 650 410 500 442 335Z", {...clip, fill: "#555", stroke: "#111", "stroke-width": 1});
add("M427 330C402 490 440 620 545 765C630 870 740 950 870 965", {...clip, stroke: "#111", "stroke-width": 1});
add(hole, {...clip, stroke: "#383838", "stroke-width": 16});
add("M300 348C240 375 206 440 208 530C220 655 305 785 395 880C485 975 570 1035 640 1065C720 1082 790 1060 860 980", {...clip, stroke: "#111", "stroke-width": 1});
add("M216 470C240 620 330 770 400 860C470 940 550 1020 640 1066", {...clip, stroke: "#111", "stroke-width": 1});
add(hole, {stroke: "#000", "stroke-width": 1});
add(sight, {stroke: "#111", "stroke-width": 1});
```
